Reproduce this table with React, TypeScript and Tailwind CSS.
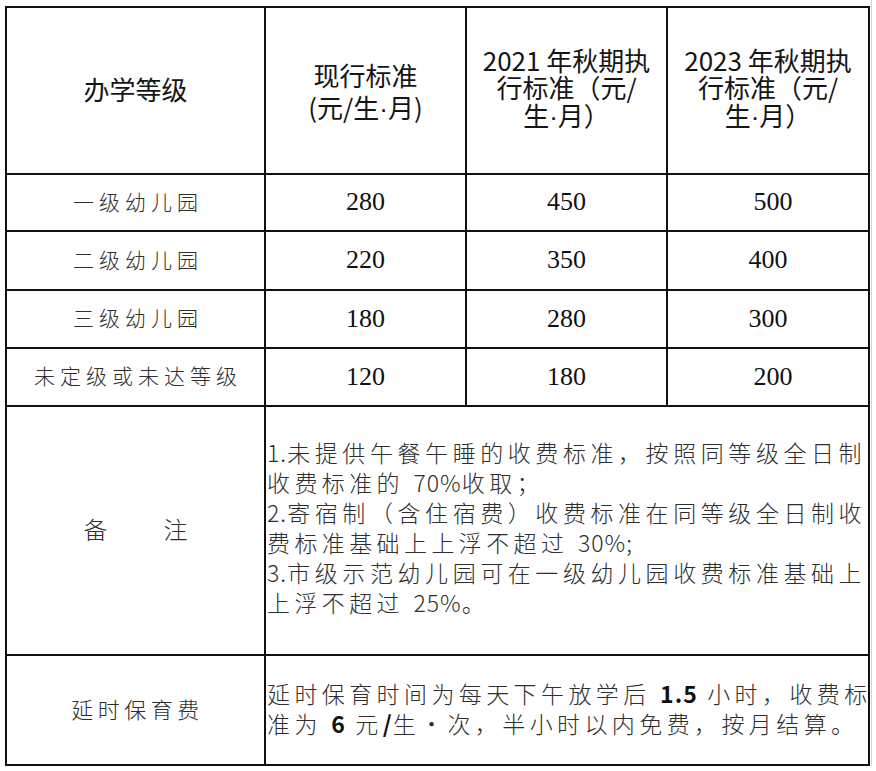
import React from "react";

const sans = "font-['Noto_Sans_CJK_SC','Noto_Sans',sans-serif]";
const serifNum = "font-['Liberation_Serif',serif]";

function Label({ text }: { text: string }) {
  return (
    <div className={`flex items-center justify-center bg-white ${sans} text-[21px] tracking-[5px] pl-[5px] pb-[2px] text-[#2e2e2e] font-light`}>
      {text}
    </div>
  );
}

function Num({ v, shift }: { v: string; shift?: boolean }) {
  return (
    <div className={`flex items-center justify-center bg-white ${serifNum} text-[26px] text-[#111] pb-[2px] ${shift ? "pl-[10px]" : ""}`}>
      {v}
    </div>
  );
}

function JLine({ children, last }: { children: React.ReactNode; last?: boolean }) {
  return (
    <div
      className={`h-[30px] leading-[30px] whitespace-nowrap ${last ? "text-left" : "text-justify [text-align-last:justify]"}`}
    >
      {children}
    </div>
  );
}

const D = ({ children, bold }: { children: React.ReactNode; bold?: boolean }) => (
  <span className={`tracking-[1px] ${bold ? "font-bold text-[#111]" : ""}`}>{children}</span>
);

const Dot = () => <span className="font-['Liberation_Sans',sans-serif]">·</span>;

export default function App() {
  const rows: [string, string, string, string, boolean][] = [
    ["一级幼儿园", "280", "450", "500", true],
    ["二级幼儿园", "220", "350", "400", false],
    ["三级幼儿园", "180", "280", "300", false],
    ["未定级或未达等级", "120", "180", "200", true],
  ];
  return (
    <div className="w-[876px] h-[771px] bg-white flex">
      <div className="ml-[5px] mt-[6px] self-start bg-[#111] p-[2px] grid grid-cols-[257px_199px_199px_200px] grid-rows-[165px_55px_57px_56px_56px_247px_108px] gap-[2px]">
        {/* header */}
        <div className={`flex items-center justify-center bg-white ${sans} text-[26px] text-[#151515] pb-[5px]`}>办学等级</div>
        <div className={`flex flex-col items-center justify-center bg-white ${sans} text-[26px] leading-[32px] text-[#151515] pt-[2px]`}>
          <div>现行标准</div>
          <div>(元/生<Dot />月)</div>
        </div>
        <div className={`flex flex-col items-center justify-center bg-white ${sans} text-[26px] leading-[27.5px] text-[#151515] pb-[4px]`}>
          <div>2021 年秋期执</div>
          <div>行标准（元/</div>
          <div>生<Dot />月）</div>
        </div>
        <div className={`flex flex-col items-center justify-center bg-white ${sans} text-[26px] leading-[27.5px] text-[#151515] pb-[4px]`}>
          <div>2023 年秋期执</div>
          <div>行标准（元/</div>
          <div>生<Dot />月）</div>
        </div>

        {rows.map(([l, a, b, c, s]) => (
          <React.Fragment key={l}>
            <Label text={l} />
            <Num v={a} />
            <Num v={b} />
            <Num v={c} shift={s} />
          </React.Fragment>
        ))}

        {/* notes */}
        <div className={`flex items-center justify-center gap-[56px] bg-white ${sans} text-[24px] text-[#2e2e2e] font-light pb-[4px]`}>
          <span>备</span>
          <span>注</span>
        </div>
        <div className={`col-span-3 flex flex-col justify-center bg-white pl-[1px] pr-[2px] pb-[8px] ${sans} text-[23px] tracking-[4.4px] text-[#2e2e2e] font-light`}>
          <JLine><D>1.</D>未提供午餐午睡的收费标准，按照同等级全日制</JLine>
          <JLine last>收费标准的 <D>70%</D>收取；</JLine>
          <JLine><D>2.</D>寄宿制（含住宿费）收费标准在同等级全日制收</JLine>
          <JLine last>费标准基础上上浮不超过 <D>30%</D>;</JLine>
          <JLine><D>3.</D>市级示范幼儿园可在一级幼儿园收费标准基础上</JLine>
          <JLine last>上浮不超过 <D>25%</D>。</JLine>
        </div>

        {/* extended care */}
        <div className={`flex items-center justify-center bg-white ${sans} text-[22px] tracking-[4.5px] pl-[4px] pb-[4px] text-[#2e2e2e] font-light`}>
          延时保育费
        </div>
        <div className={`col-span-3 flex flex-col justify-center bg-white pl-[1px] pr-[2px] pb-[4px] ${sans} text-[23px] tracking-[4.4px] text-[#2e2e2e] font-light`}>
          <JLine>延时保育时间为每天下午放学后 <D bold>1.5</D> 小时，收费标</JLine>
          <JLine last>准为 <D bold>6</D> 元<D bold>/</D>生・次，半小时以内免费，按月结算。</JLine>
        </div>
      </div>
      <div className="ml-[1px] w-px h-[766px] bg-[#d4d4d4]" />
    </div>
  );
}
